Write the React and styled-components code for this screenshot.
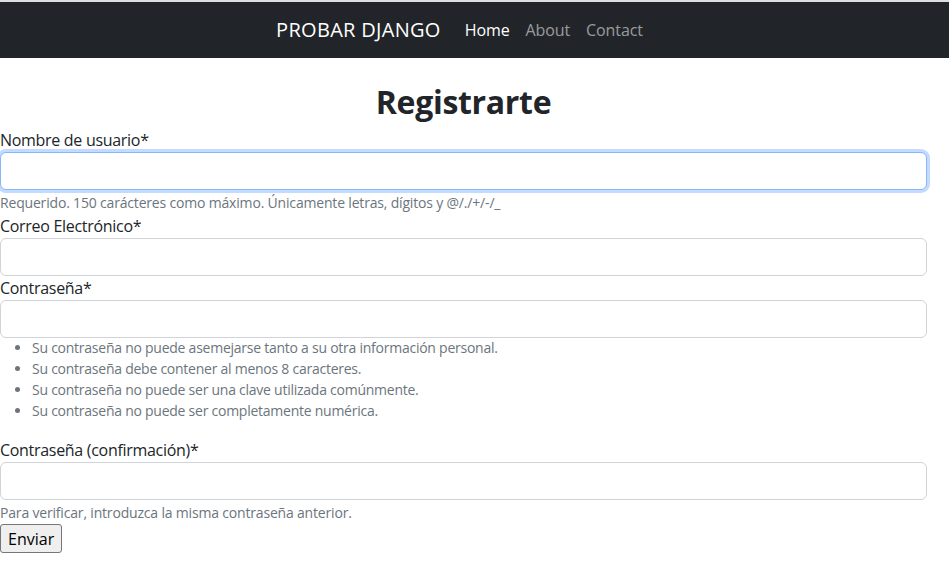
import React from 'react';
import styled, { createGlobalStyle } from 'styled-components';

const Global = createGlobalStyle`
  html, body { margin: 0; padding: 0; background: #fff; }
  body {
    font-family: "Open Sans", "Noto Sans", sans-serif;
    font-size: 16px;
    line-height: 1.5;
    color: #212529;
    border-top: 2px solid #dedede;
  }
`;

const Navbar = styled.nav`
  background: #212529;
  height: 56px;
  display: flex;
  align-items: center;
`;

const NavInner = styled.div`
  width: 927px;
  display: flex;
  justify-content: center;
  align-items: center;
`;

const Brand = styled.a`
  font-size: 20px;
  color: #fff;
  margin-right: 16px;
  letter-spacing: 0.3px;
`;

const NavLink = styled.a`
  padding: 0 8px;
  font-size: 16px;
  color: ${p => (p.active ? '#fff' : 'rgba(255,255,255,0.55)')};
  letter-spacing: -0.1px;
`;

const Main = styled.main`
  width: 927px;
`;

const Title = styled.h2`
  margin: 25px 0 7px;
  font-size: 32px;
  font-weight: 700;
  line-height: 1.2;
  text-align: center;
  letter-spacing: -0.3px;
`;

const Label = styled.label`
  display: block;
  line-height: 24px;
  letter-spacing: -0.3px;
`;

const Input = styled.input`
  display: block;
  box-sizing: border-box;
  width: 100%;
  height: 38px;
  margin: 0;
  padding: 6px 12px;
  font: inherit;
  border: 1px solid ${p => (p.focused ? '#86b7fe' : '#ced4da')};
  border-radius: 6px;
  box-shadow: ${p => (p.focused ? '0 0 0 3px rgba(13,110,253,0.25)' : 'none')};
  outline: none;
`;

const Help = styled.div`
  font-size: 14px;
  line-height: 21px;
  color: #6c757d;
  margin: 2px 0 1px;
  letter-spacing: -0.18px;
`;

const Rules = styled.ul`
  margin: 0 0 17px;
  padding-left: 32px;
  font-size: 14px;
  line-height: 20.75px;
  color: #6c757d;
  letter-spacing: -0.25px;
`;

const Submit = styled.button`
  display: block;
  font-family: "Open Sans", "Noto Sans", sans-serif;
  font-size: 16px;
  height: 29px;
  margin: 0;
  padding: 0 7px;
  color: #000;
  background: #efefef;
  border: 1px solid #767676;
  border-radius: 3px;
  letter-spacing: 0;
`;

export default function App() {
  return (
    <>
      <Global />
      <Navbar>
        <NavInner>
          <Brand>PROBAR DJANGO</Brand>
          <NavLink active>Home</NavLink>
          <NavLink>About</NavLink>
          <NavLink>Contact</NavLink>
        </NavInner>
      </Navbar>
      <Main>
        <Title>Registrarte</Title>
        <form onSubmit={e => e.preventDefault()}>
          <Label>Nombre de usuario*</Label>
          <Input focused type="text" />
          <Help>Requerido. 150 carácteres como máximo. Únicamente letras, dígitos y @/./+/-/_</Help>

          <Label>Correo Electrónico*</Label>
          <Input type="email" />

          <Label>Contraseña*</Label>
          <Input type="password" />
          <Rules>
            <li>Su contraseña no puede asemejarse tanto a su otra información personal.</li>
            <li>Su contraseña debe contener al menos 8 caracteres.</li>
            <li>Su contraseña no puede ser una clave utilizada comúnmente.</li>
            <li>Su contraseña no puede ser completamente numérica.</li>
          </Rules>

          <Label>Contraseña (confirmación)*</Label>
          <Input type="password" />
          <Help>Para verificar, introduzca la misma contraseña anterior.</Help>

          <Submit type="submit">Enviar</Submit>
        </form>
      </Main>
    </>
  );
}
